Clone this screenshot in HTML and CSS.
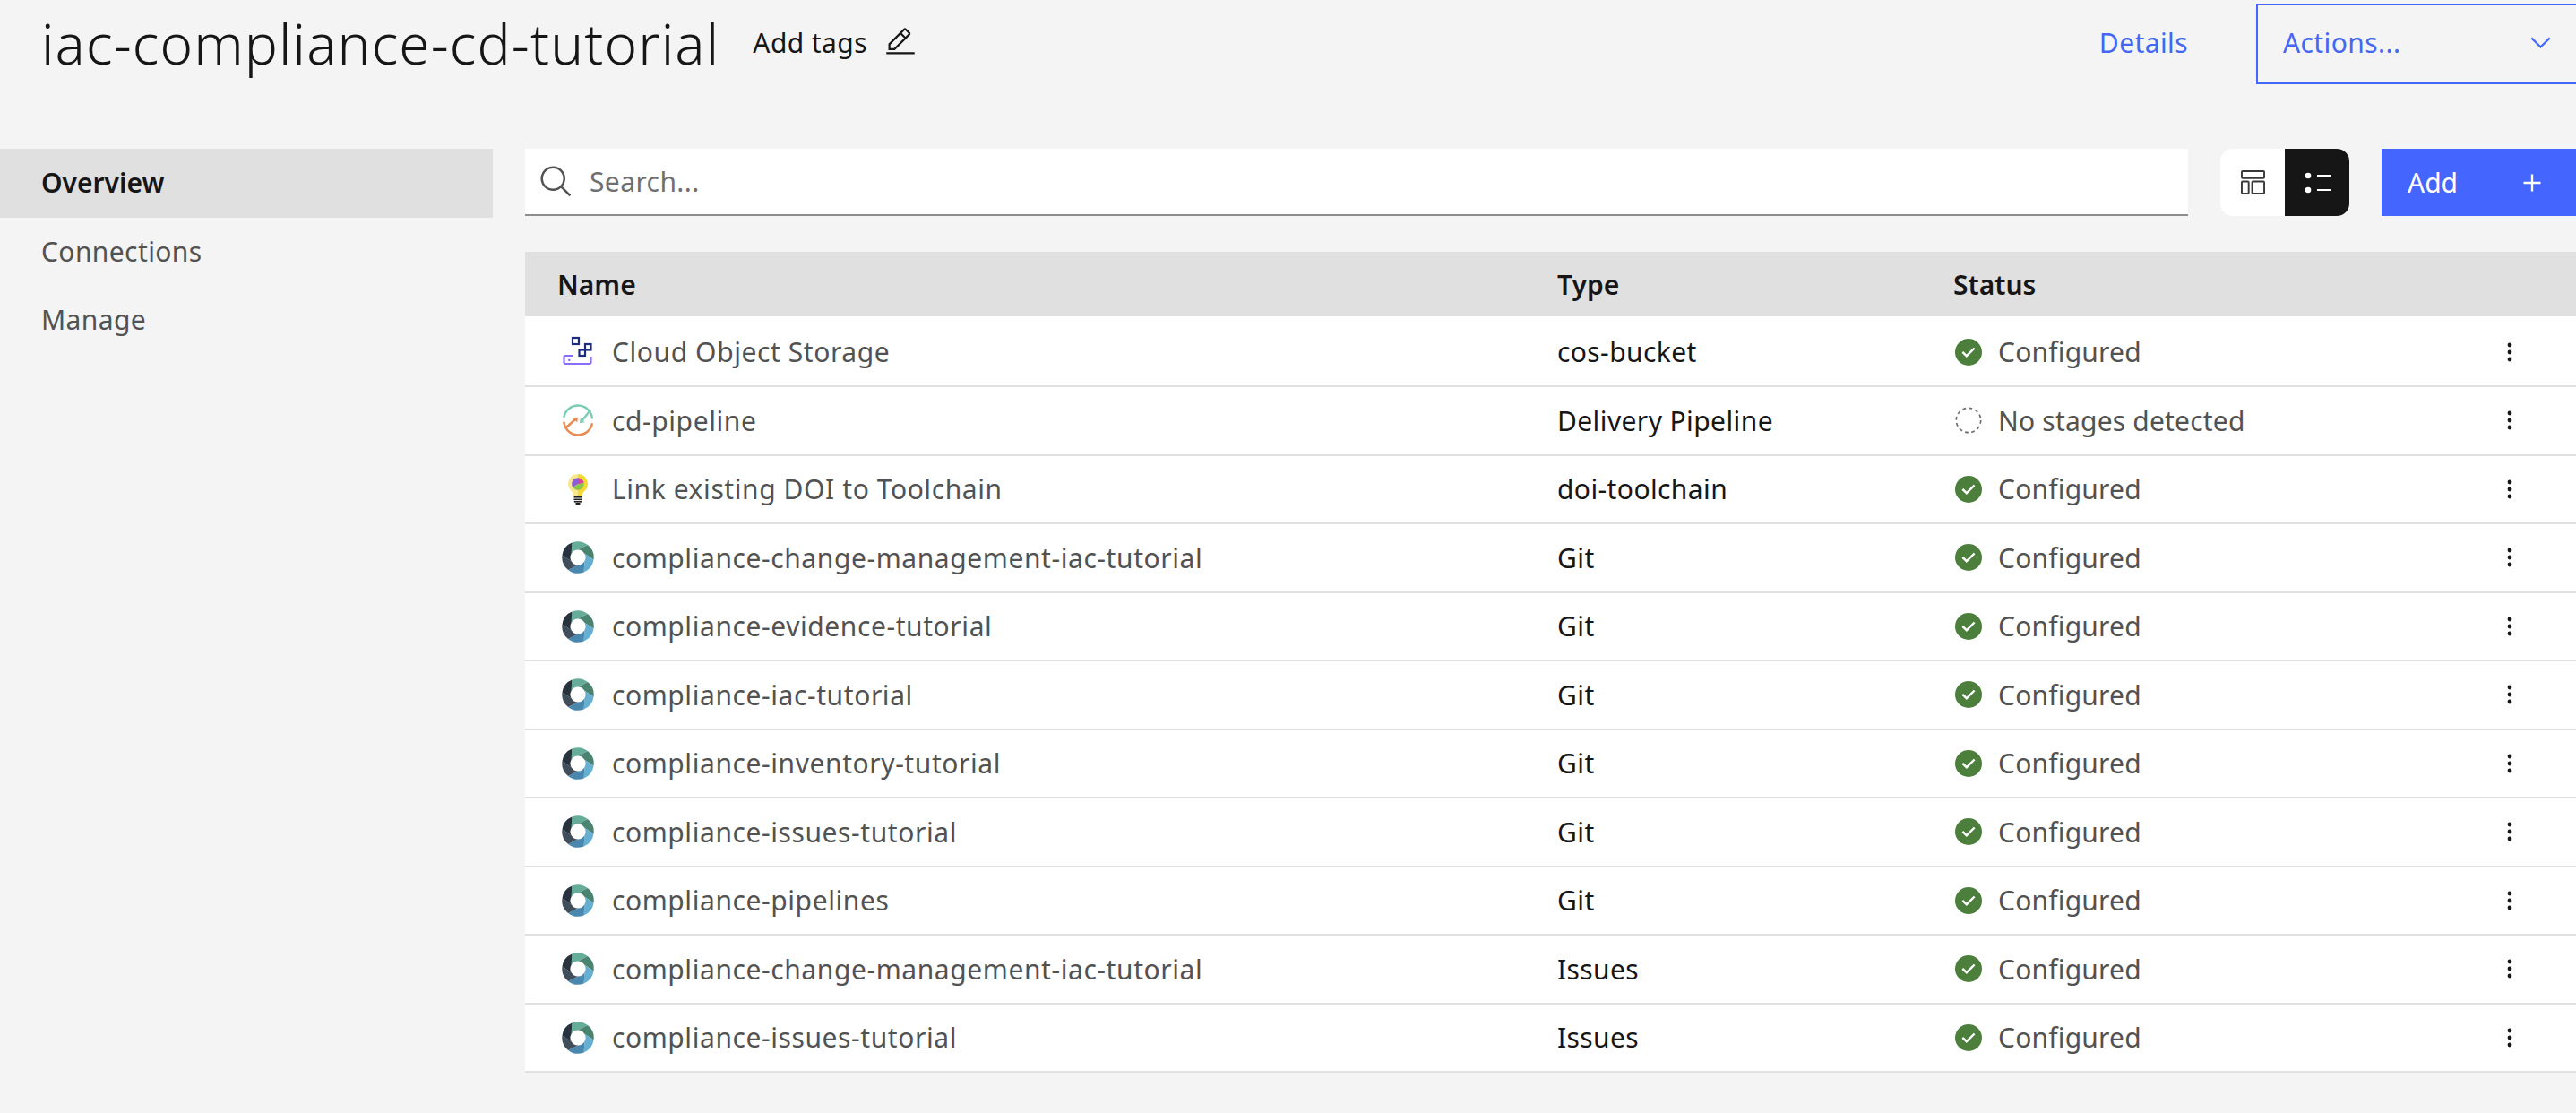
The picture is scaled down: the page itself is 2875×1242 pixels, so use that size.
FILE: index.html
```html
<!DOCTYPE html>
<html lang="en">

<head>
  <meta charset="UTF-8">
  <title>iac-compliance-cd-tutorial</title>
  <link rel="stylesheet" href="styles.css">
</head>

<body>
  <!-- icon sprite -->
  <svg class="sprite" xmlns="http://www.w3.org/2000/svg">
    <symbol id="i-search" viewBox="0 0 32 32"><path d="M29 27.59l-7.55-7.55a11.02 11.02 0 1 0-1.41 1.41L27.59 29zM4 13a9 9 0 1 1 9 9 9.01 9.01 0 0 1-9-9z"/></symbol>
    <symbol id="i-edit" viewBox="0 0 32 32"><path d="M2 26h28v2H2zM25.4 9c.8-.8.8-2 0-2.8l-3.6-3.6c-.8-.8-2-.8-2.8 0l-15 15V24h6.4zM20.4 4L24 7.6l-3 3L17.4 7zM6 22v-3.6l10-10 3.6 3.6-10 10z"/></symbol>
    <symbol id="i-chevron" viewBox="0 0 32 32"><path d="M16 22L6 12l1.4-1.4 8.6 8.6 8.6-8.6L26 12z"/></symbol>
    <symbol id="i-add" viewBox="0 0 32 32"><path d="M17 15V8h-2v7H8v2h7v7h2v-7h7v-2z"/></symbol>
    <symbol id="i-kebab" viewBox="0 0 32 32"><circle cx="16" cy="8" r="2.4"/><circle cx="16" cy="16" r="2.4"/><circle cx="16" cy="24" r="2.4"/></symbol>
    <symbol id="i-ok" viewBox="2 2 28 28"><circle cx="16" cy="16" r="14" fill="#4b7f3b"/><path fill="#fff" d="M14 21.59l-5-5L10.59 15 14 18.41 21.41 11 23 12.59z"/></symbol>
    <symbol id="i-pending" viewBox="0 0 32 32"><circle cx="16" cy="16" r="14.6" fill="none" stroke="#6f6f6f" stroke-width="1.8" stroke-dasharray="4 3.65"/></symbol>
    <symbol id="i-cos" viewBox="0 0 36 36">
      <path fill="none" stroke="#8a6cff" stroke-width="2.2" d="M13 22H4a1.5 1.5 0 0 0-1.500 1.500v6A1.500 1.500 0 0 0 4 31h27a1.500 1.500 0 0 0 1.500-1.500V23"/>
      <rect x="7.200" y="25.800" width="2.200" height="2.200" fill="#8a6cff"/>
      <g fill="none" stroke="#1c2a80" stroke-width="2.200">
        <rect x="12" y="2" width="7" height="7"/>
        <rect x="26" y="9" width="6.500" height="6.500"/>
        <rect x="19.500" y="15.500" width="6.500" height="6.500"/>
      </g>
    </symbol>
    <symbol id="i-pipeline" viewBox="0 0 36 36">
      <g fill="none" stroke-width="2.400">
        <path stroke="#7ccdb5" d="M2.300 14.700A16 16 0 0 1 34 16.300"/>
        <path stroke="#e88a52" d="M2.300 19.700A16 16 0 0 0 34 21.300"/>
        <path stroke="#e88a52" d="M5 26l10-9"/>
        <path stroke="#7ccdb5" d="M32 6.500L23 18"/>
      </g>
      <path fill="#e88a52" d="M18 14.700l-.8 5.800-4.900-5z"/>
      <path fill="#7ccdb5" d="M20 21.300l.7-5.800 5 4.800z"/>
    </symbol>
    <symbol id="i-bulb" viewBox="0 0 36 36">
      <path fill="#f8e78f" d="M18 1a11 11 0 0 0-6.500 19.800c1.300 1.100 1.700 3 1.700 4.700H18z"/>
      <path fill="#f4d833" d="M18 1a11 11 0 0 1 6.500 19.800c-1.300 1.100-1.700 3-1.700 4.700H18z"/>
      <path fill="#8a5ed0" d="M18 12.300l-5.600 3.500A6.700 6.700 0 0 1 18 5.300z"/>
      <path fill="#d83f9f" d="M18 5.300a6.700 6.700 0 0 1 6.600 5.800l-6.600 1.200z"/>
      <path fill="#8cc34a" d="M24.600 11.100A6.700 6.700 0 0 1 12.400 15.800l5.600-3.500z"/>
      <g fill="#222">
        <rect x="13.500" y="26" width="9" height="1.600"/>
        <rect x="13.500" y="28.500" width="9" height="1.600"/>
        <rect x="13.800" y="31" width="8.400" height="1.600"/>
        <rect x="15.500" y="33" width="5" height="2"/>
      </g>
    </symbol>
    <symbol id="i-git" viewBox="-18 -18 36 36">
      <path fill="#65ad98" d="M-6.630-16.410A17.700 17.700 0 0 1 10.900-13.950L0-8.500A8.500 8.500 0 0 0-7.360-4.250z"/>
      <path fill="#4a8470" d="M10.900-13.950A17.700 17.700 0 0 1 17.530 2.460L7.360-4.250A8.500 8.500 0 0 0 0-8.500z"/>
      <path fill="#65afd3" d="M17.530 2.460A17.700 17.700 0 0 1 6.630 16.410L7.360 4.250A8.500 8.500 0 0 0 7.360-4.250z"/>
      <path fill="#4a87ae" d="M6.630 16.410A17.700 17.700 0 0 1-10.900 13.950L0 8.500A8.500 8.500 0 0 0 7.360 4.250z"/>
      <path fill="#3f4e5a" d="M-10.900 13.950A17.700 17.700 0 0 1-17.530-2.460L-7.360 4.250A8.500 8.500 0 0 0 0 8.500z"/>
      <path fill="#28333d" d="M-17.530-2.460A17.700 17.700 0 0 1-6.630-16.410L-7.360-4.250A8.500 8.500 0 0 0-7.360 4.250z"/>
    </symbol>
  </svg>

  <header class="page-header">
    <h1 class="page-title">iac-compliance-cd-tutorial</h1>
    <a class="tags">Add tags <svg class="tags-icon"><use href="#i-edit"></use></svg></a>
    <a class="details">Details</a>
    <div class="actions">
      <span>Actions...</span>
      <svg class="actions-icon"><use href="#i-chevron"></use></svg>
    </div>
  </header>

  <div class="layout">
    <nav class="side-nav">
      <a class="nav-item selected">Overview</a>
      <a class="nav-item">Connections</a>
      <a class="nav-item">Manage</a>
    </nav>

    <main class="content">
      <div class="toolbar">
        <div class="search">
          <svg class="search-icon"><use href="#i-search"></use></svg>
          <span>Search...</span>
        </div>
        <div class="view-switch">
          <button class="view-btn">
            <svg class="view-icon" viewBox="0 0 28 28" fill="none" stroke="currentColor" stroke-width="2">
              <rect x="1" y="1" width="26" height="8" rx="1"/>
              <rect x="1" y="13" width="8" height="14" rx="1"/>
              <rect x="13" y="13" width="14" height="14" rx="1"/>
            </svg>
          </button>
          <button class="view-btn active">
            <svg class="view-icon wide" viewBox="0 0 32 28" fill="currentColor">
              <circle cx="6" cy="6" r="3.3"/>
              <circle cx="6" cy="22" r="3.3"/>
              <rect x="16" y="5" width="16" height="2"/>
              <rect x="16" y="21" width="16" height="2"/>
            </svg>
          </button>
        </div>
        <button class="add-btn">
          <span>Add</span>
          <svg class="add-icon"><use href="#i-add"></use></svg>
        </button>
      </div>

      <div class="tools-table">
        <div class="row head">
          <div>Name</div>
          <div>Type</div>
          <div>Status</div>
        </div>

        <div class="row">
          <div class="name"><svg class="tool-icon"><use href="#i-cos"></use></svg>Cloud Object Storage</div>
          <div>cos-bucket</div>
          <div class="status"><svg class="status-icon"><use href="#i-ok"></use></svg>Configured</div>
          <svg class="kebab"><use href="#i-kebab"></use></svg>
        </div>
        <div class="row">
          <div class="name"><svg class="tool-icon"><use href="#i-pipeline"></use></svg>cd-pipeline</div>
          <div>Delivery Pipeline</div>
          <div class="status"><svg class="status-icon"><use href="#i-pending"></use></svg>No stages detected</div>
          <svg class="kebab"><use href="#i-kebab"></use></svg>
        </div>
        <div class="row">
          <div class="name"><svg class="tool-icon"><use href="#i-bulb"></use></svg>Link existing DOI to Toolchain</div>
          <div>doi-toolchain</div>
          <div class="status"><svg class="status-icon"><use href="#i-ok"></use></svg>Configured</div>
          <svg class="kebab"><use href="#i-kebab"></use></svg>
        </div>
        <div class="row">
          <div class="name"><svg class="tool-icon"><use href="#i-git"></use></svg>compliance-change-management-iac-tutorial</div>
          <div>Git</div>
          <div class="status"><svg class="status-icon"><use href="#i-ok"></use></svg>Configured</div>
          <svg class="kebab"><use href="#i-kebab"></use></svg>
        </div>
        <div class="row">
          <div class="name"><svg class="tool-icon"><use href="#i-git"></use></svg>compliance-evidence-tutorial</div>
          <div>Git</div>
          <div class="status"><svg class="status-icon"><use href="#i-ok"></use></svg>Configured</div>
          <svg class="kebab"><use href="#i-kebab"></use></svg>
        </div>
        <div class="row">
          <div class="name"><svg class="tool-icon"><use href="#i-git"></use></svg>compliance-iac-tutorial</div>
          <div>Git</div>
          <div class="status"><svg class="status-icon"><use href="#i-ok"></use></svg>Configured</div>
          <svg class="kebab"><use href="#i-kebab"></use></svg>
        </div>
        <div class="row">
          <div class="name"><svg class="tool-icon"><use href="#i-git"></use></svg>compliance-inventory-tutorial</div>
          <div>Git</div>
          <div class="status"><svg class="status-icon"><use href="#i-ok"></use></svg>Configured</div>
          <svg class="kebab"><use href="#i-kebab"></use></svg>
        </div>
        <div class="row">
          <div class="name"><svg class="tool-icon"><use href="#i-git"></use></svg>compliance-issues-tutorial</div>
          <div>Git</div>
          <div class="status"><svg class="status-icon"><use href="#i-ok"></use></svg>Configured</div>
          <svg class="kebab"><use href="#i-kebab"></use></svg>
        </div>
        <div class="row">
          <div class="name"><svg class="tool-icon"><use href="#i-git"></use></svg>compliance-pipelines</div>
          <div>Git</div>
          <div class="status"><svg class="status-icon"><use href="#i-ok"></use></svg>Configured</div>
          <svg class="kebab"><use href="#i-kebab"></use></svg>
        </div>
        <div class="row">
          <div class="name"><svg class="tool-icon"><use href="#i-git"></use></svg>compliance-change-management-iac-tutorial</div>
          <div>Issues</div>
          <div class="status"><svg class="status-icon"><use href="#i-ok"></use></svg>Configured</div>
          <svg class="kebab"><use href="#i-kebab"></use></svg>
        </div>
        <div class="row">
          <div class="name"><svg class="tool-icon"><use href="#i-git"></use></svg>compliance-issues-tutorial</div>
          <div>Issues</div>
          <div class="status"><svg class="status-icon"><use href="#i-ok"></use></svg>Configured</div>
          <svg class="kebab"><use href="#i-kebab"></use></svg>
        </div>
      </div>
    </main>
  </div>
</body>

</html>
```

FILE: styles.css
```css
* {
  box-sizing: border-box;
}

body {
  margin: 0;
  height: 1242px;
  overflow: hidden;
  background: #f4f4f4;
  color: #161616;
  font-family: "Noto Sans", Roboto, sans-serif;
  font-size: 30px;
  letter-spacing: .4px;
}

.sprite {
  display: none;
}

/* Top of the page */
.page-header {
  display: flex;
  height: 94px;
  padding: 4px 0 0 46px;
}

.page-title {
  margin: 0;
  font-size: 62px;
  font-weight: 300;
  letter-spacing: 1.15px;
  line-height: 88px;
  white-space: nowrap;
}

.tags {
  display: flex;
  align-items: center;
  gap: 19px;
  height: 86px;
  margin-left: 37px;
}

.tags-icon {
  width: 36px;
  height: 36px;
  fill: #161616;
}

.details {
  margin-left: auto;
  color: #4566f5;
  line-height: 88px;
}

.actions {
  display: flex;
  align-items: center;
  justify-content: space-between;
  width: 357px;
  height: 90px;
  margin-left: 76px;
  padding: 0 22px 4px 28px;
  border: 2px solid #4466ff;
  border-right: 0;
  color: #4566f5;
}

.actions-icon {
  width: 35px;
  height: 35px;
  fill: #4466ff;
}

/* Sidebar + content */
.layout {
  display: grid;
  grid-template-columns: 550px 1fr;
  column-gap: 36px;
  margin-top: 72px;
}

.nav-item {
  display: block;
  height: 76.5px;
  padding-left: 46px;
  color: #525252;
  line-height: 76px;
}

.nav-item.selected {
  background: #e0e0e0;
  color: #161616;
  font-weight: 600;
  letter-spacing: 0;
}

.toolbar {
  display: flex;
  gap: 36px;
  height: 75px;
}

.search {
  display: flex;
  flex: 1;
  align-items: center;
  gap: 17px;
  padding-left: 15px;
  border-bottom: 2px solid #8d8d8d;
  background: #fff;
  color: #6f6f6f;
}

.search-icon {
  width: 40px;
  height: 40px;
  fill: #525252;
}

.view-switch {
  display: flex;
  overflow: hidden;
  border-radius: 14px;
}

.view-btn {
  display: flex;
  align-items: center;
  justify-content: center;
  width: 72px;
  padding: 0;
  border: 0;
  background: #fff;
  color: #393939;
}

.view-btn.active {
  background: #161616;
  color: #fff;
}

.view-icon {
  width: 27px;
  height: 27px;
}

.view-icon.wide {
  width: 32px;
  height: 28px;
}

.add-btn {
  display: flex;
  align-items: center;
  justify-content: space-between;
  width: 217px;
  padding: 0 30px 0 29px;
  border: 0;
  background: #4466ff;
  color: #fff;
  font: inherit;
}

.add-icon {
  width: 38px;
  height: 38px;
  fill: #fff;
}

/* Table */
.tools-table {
  margin-top: 40px;
}

.row {
  display: grid;
  grid-template-columns: 1152px 442px 1fr 48px 50px;
  align-items: center;
  height: 76.5px;
  border-bottom: 2px solid #e0e0e0;
  background: #fff;
  color: #161616;
}

.row > :first-child {
  padding-left: 36px;
}

.row.head {
  height: 72px;
  border-bottom: 0;
  background: #e0e0e0;
  font-weight: 600;
  letter-spacing: 0;
}

/* first row sits a little lower under the header */
.row.head + .row {
  height: 79px;
  padding-top: 2.6px;
}

.name {
  display: flex;
  align-items: center;
  gap: 20px;
  color: #525252;
  letter-spacing: .58px;
}

.tool-icon {
  width: 36px;
  height: 36px;
  margin-left: 5px;
}

.status {
  display: flex;
  align-items: center;
  gap: 18px;
  color: #525252;
  letter-spacing: .2px;
}

.status-icon {
  width: 30px;
  height: 30px;
  margin-left: 2px;
}

.kebab {
  width: 32px;
  height: 32px;
  justify-self: center;
  fill: #161616;
}
```
